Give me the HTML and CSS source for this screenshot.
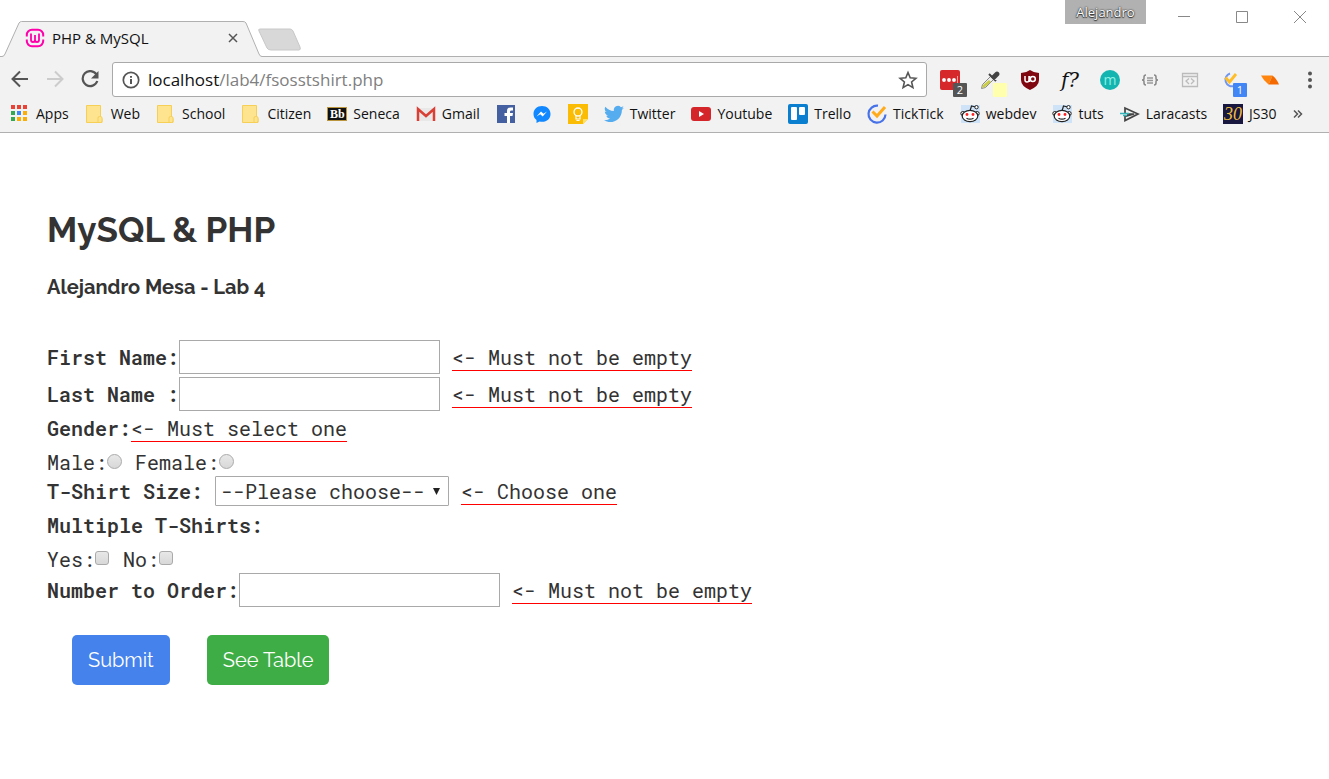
FILE: index.html
```html
<!DOCTYPE html>
<html lang="en">
<head>
<meta charset="utf-8">
<title>PHP &amp; MySQL</title>
<link rel="stylesheet" href="styles.css">
</head>
<body>
<svg class="defs" aria-hidden="true">
  <symbol id="folder" viewBox="0 0 20 20">
    <path d="M1.500 1.500H15.500V13.500L17 14.500V18.500H1.500Z" fill="#ffe48f" stroke="#f6cf56"/>
    <path d="M13 18.500V14q0-1.500 1.500-1.500h1q1.500 0 1.500 1.500v3q0 1.500-1.500 1.500z" fill="#ffe48f" stroke="#f6cf56"/>
  </symbol>
  <symbol id="reddit" viewBox="0 0 20 20">
    <rect x="1" y="1" width="19" height="18" fill="#cee3f8"/>
    <path d="M10 7l1.500-5 4 1" fill="none" stroke="#222" stroke-width="1.200"/>
    <circle cx="16.500" cy="3.200" r="1.700" fill="#fff" stroke="#222"/>
    <circle cx="2.800" cy="9.500" r="2" fill="#fff" stroke="#222"/>
    <circle cx="17.200" cy="9.500" r="2" fill="#fff" stroke="#222"/>
    <ellipse cx="10" cy="12" rx="7.800" ry="5.700" fill="#fff" stroke="#222" stroke-width="1.200"/>
    <circle cx="7" cy="10.500" r="1.400" fill="#f22"/><circle cx="13" cy="10.500" r="1.400" fill="#f22"/>
    <path d="M6.500 14.200q3.500 2 7 0" fill="none" stroke="#222" stroke-width="1.200"/>
  </symbol>
</svg>

<header class="browser">
  <div class="titlebar">
    <div class="tab">
      <svg class="tab-shape" viewBox="0 0 262 37" width="262" height="37" aria-hidden="true">
        <path d="M0 37V35.500H2Q4 35.500 5 33L19 2Q20 .5 21.500 .5H243Q245 .5 246 2L259 33Q260 35.500 262 35.500V37Z" fill="#f2f2f2"/>
        <path d="M0 35.500H2Q4 35.500 5 33L19 2Q20 .5 21.500 .5H243Q245 .5 246 2L259 33Q260 35.500 262 35.500" fill="none" stroke="#b0b0b0"/>
      </svg>
      <svg class="favicon" viewBox="0 0 20 20" width="20" height="20" aria-hidden="true">
        <path d="M1.800 8.500V7a5.200 5.200 0 0 1 5.200-5.200h6a5.200 5.200 0 0 1 5.200 5.200v1.500M1.800 11.500V13a5.200 5.200 0 0 0 5.200 5.200h6a5.200 5.200 0 0 0 5.200-5.200v-1.500" fill="none" stroke="#f0a" stroke-width="2"/>
        <path d="M6 5.500V12q0 2 2 2t2-2V7v5q0 2 2 2t2-2V5.500" fill="none" stroke="#f0a" stroke-width="1.800"/>
      </svg>
      <span class="tab-title">PHP &amp; MySQL</span>
      <button class="icon-button tab-close" aria-label="Close tab"><svg viewBox="0 0 10 10" width="10" height="10"><path d="M1 1l8 8M9 1L1 9" stroke="#555" stroke-width="1.500"/></svg></button>
    </div>
    <button class="icon-button new-tab" aria-label="New tab"><svg viewBox="0 0 44 24" width="44" height="24"><path d="M2 1H32Q34 1 35 3L42 19Q43 22 41 22H13Q10 22 9 20L1 3Q0 1 2 1Z" fill="#d8d8d8" stroke="#c8c8c8"/></svg></button>
    <div class="window">
      <button class="profile">Alejandro</button>
      <button class="icon-button window-button" aria-label="Minimize"><svg viewBox="0 0 14 14" width="14" height="14"><path d="M1 6.500h12" stroke="#888"/></svg></button>
      <button class="icon-button window-button" aria-label="Maximize"><svg viewBox="0 0 14 14" width="14" height="14"><path d="M1.500 1.500h11v11h-11z" fill="none" stroke="#888"/></svg></button>
      <button class="icon-button window-button" aria-label="Close window"><svg viewBox="0 0 14 14" width="14" height="14"><path d="M1 1l12 12M13 1L1 13" stroke="#888"/></svg></button>
    </div>
  </div>

  <div class="toolbar">
    <nav class="history" aria-label="History">
      <button class="icon-button" aria-label="Back"><svg viewBox="0 0 20 20" width="20" height="20"><path d="M18 9H3M10 1.500L2.500 9l7.500 7.500" fill="none" stroke="#555" stroke-width="2"/></svg></button>
      <button class="icon-button" aria-label="Forward"><svg viewBox="0 0 20 20" width="20" height="20"><path d="M2 9h15M10 1.500l7.500 7.500-7.500 7.500" fill="none" stroke="#ccc" stroke-width="2"/></svg></button>
      <button class="icon-button" aria-label="Reload"><svg viewBox="0 0 20 20" width="20" height="20"><path d="M16.500 4.500A7.500 7.500 0 1 0 17.300 11" fill="none" stroke="#555" stroke-width="2.200"/><path d="M18.500 1V8.500H11z" fill="#555"/></svg></button>
    </nav>
    <div class="address">
      <svg viewBox="0 0 18 18" width="18" height="18" aria-hidden="true"><circle cx="9" cy="9" r="7.700" fill="none" stroke="#555" stroke-width="1.700"/><path d="M9 8v5M9 5v1.800" stroke="#555" stroke-width="2"/></svg>
      <div class="url">localhost<span class="path">/lab4/fsosstshirt.php</span></div>
      <button class="icon-button" aria-label="Bookmark this page"><svg viewBox="0 0 20 20" width="20" height="20"><path d="M10 2.500l2.200 5.300 5.700.5-4.300 3.700 1.300 5.600-4.900-3-4.900 3 1.300-5.600-4.300-3.700 5.700-.5z" fill="none" stroke="#555" stroke-width="1.600"/></svg></button>
    </div>
    <div class="extensions">
      <button class="icon-button ext" aria-label="Passwords"><svg viewBox="0 0 20 20" width="20" height="20"><rect width="20" height="20" rx="2" fill="#d6282b"/><circle cx="4" cy="10" r="1.900" fill="#fff"/><circle cx="9" cy="10" r="1.900" fill="#fff"/><circle cx="14" cy="10" r="1.900" fill="#fff"/><path d="M17.500 6v8" stroke="#ff9b9b"/></svg><span class="badge dark">2</span></button>
      <button class="icon-button ext" aria-label="Color picker"><svg viewBox="0 0 20 20" width="20" height="20"><path d="M1.500 18.500l1-4 8-8 3 3-8 8z" fill="#eee" stroke="#888"/><path d="M2 18l1-3 6-5 2 2-6 5z" fill="#c9cc45"/><path d="M9 4l7 7M12 7l4-4q1-1 2 0t0 2l-4 4z" fill="#444" stroke="#444" stroke-width="2"/></svg><span class="badge swatch"></span></button>
      <button class="icon-button ext" aria-label="Content blocker"><svg viewBox="0 0 20 20" width="20" height="20"><path d="M10 0q4 3 9 3v7q0 6-9 10Q1 16 1 10V3q5 0 9-3z" fill="#800610"/><path d="M5 6v4q0 2 2 2t2-2V6M9.500 12V6" fill="none" stroke="#fff" stroke-width="1.500"/><circle cx="12.800" cy="9" r="2.500" fill="none" stroke="#fff" stroke-width="1.500"/></svg></button>
      <button class="icon-button ext script" aria-label="Font finder">f?</button>
      <button class="icon-button ext round" aria-label="Momentum">m</button>
      <button class="icon-button ext" aria-label="JSON viewer"><svg viewBox="0 0 20 20" width="20" height="20"><path d="M6 5q-2 0-2 2v1.500Q4 10 2 10q2 0 2 1.500V13q0 2 2 2M14 5q2 0 2 2v1.500q0 1.500 2 1.500-2 0-2 1.500V13q0 2-2 2" fill="none" stroke="#888" stroke-width="1.500"/><path d="M7 8h6M7 10.500h6M7 13h6" stroke="#999" stroke-width="1.300"/></svg></button>
      <button class="icon-button ext" aria-label="View source"><svg viewBox="0 0 20 20" width="20" height="20"><path d="M2.500 3.500h15v13h-15zM2.500 6.500h15" fill="none" stroke="#bbb" stroke-width="1.300"/><path d="M9 8.500L6 11l3 3M11 8.500l3 2.500-3 3" fill="none" stroke="#bbb" stroke-width="1.300"/></svg></button>
      <button class="icon-button ext" aria-label="Tasks"><svg viewBox="0 0 20 20" width="20" height="20"><path d="M10 3.500A6.500 6.500 0 1 0 14 16" fill="none" stroke="#7196ee" stroke-width="2"/><path d="M5.500 7.500l4 4.500L16 4" fill="none" stroke="#ffbe27" stroke-width="2.800"/></svg><span class="badge blue">1</span></button>
      <button class="icon-button ext" aria-label="Player"><svg viewBox="0 0 20 20" width="20" height="20"><path d="M1 5.500h11.500l-4 9q-5-4-7.500-9z" fill="#ff850f"/><path d="M12.500 5.500q4 3 6.500 9H8.500z" fill="#f46a00"/></svg></button>
      <button class="icon-button ext" aria-label="Menu"><svg viewBox="0 0 20 20" width="20" height="20"><g fill="#555"><circle cx="10" cy="3.500" r="2"/><circle cx="10" cy="10" r="2"/><circle cx="10" cy="16.500" r="2"/></g></svg></button>
    </div>
  </div>

  <nav class="bookmarks" aria-label="Bookmarks">
    <a href="#"><svg viewBox="0 0 20 20" width="20" height="20"><g fill="#ea4335"><path d="M1 1h4v4H1zM7 1h4v4H7zM13 1h4v4h-4z"/></g><path d="M1 7h4v4H1zM1 13h4v4H1z" fill="#34a853"/><path d="M7 7h4v4H7z" fill="#4285f4"/><path d="M13 7h4v4h-4zM7 13h4v4H7zM13 13h4v4h-4z" fill="#fbae05"/></svg>Apps</a>
    <a href="#"><svg width="20" height="20"><use href="#folder"/></svg>Web</a>
    <a href="#"><svg width="20" height="20"><use href="#folder"/></svg>School</a>
    <a href="#"><svg width="20" height="20"><use href="#folder"/></svg>Citizen</a>
    <a href="#"><span class="blackboard">Bb</span>Seneca</a>
    <a href="#"><svg viewBox="0 0 20 20" width="20" height="20"><path d="M1 4h18v13H1z" fill="#e8e8e8"/><path d="M2 17V5l8 7 8-7v12" fill="none" stroke="#d93f35" stroke-width="2.500"/></svg>Gmail</a>
    <a href="#" aria-label="Facebook"><svg viewBox="0 0 20 20" width="20" height="20"><path d="M1 1h18v18H1z" fill="#4460a0"/><path d="M11 19v-7H8.500V9H11V7q0-3.500 3.500-3.500H17v3h-1.500q-1.500 0-1.500 1.300V9h3l-.5 3H14v7z" fill="#fff"/></svg></a>
    <a href="#" aria-label="Messenger"><svg viewBox="0 0 20 20" width="20" height="20"><path d="M10 2c-5 0-8.500 3.400-8.500 8 0 2.500 1 4.500 3 6v3l3-1.500c6 1.500 11-2 11-7.500 0-4.600-3.500-8-8.500-8z" fill="#1188ff"/><path d="M4.500 12.500L9 7.500l2.500 2.300L15 7.500l-4.300 5-2.500-2.200z" fill="#fff"/></svg></a>
    <a href="#" aria-label="Keep"><svg viewBox="0 0 20 20" width="20" height="20"><path d="M0 0h20v15l-5 5H0z" fill="#fbbc05"/><path d="M15 20v-5h5z" fill="#ffe168"/><circle cx="10" cy="8" r="4" fill="none" stroke="#fff" stroke-width="1.300"/><path d="M8 11v4h4v-4M8.500 16.500h3" fill="none" stroke="#fff" stroke-width="1.200"/></svg></a>
    <a href="#"><svg viewBox="0 0 24 24" width="20" height="20"><path d="M24 4.600c-.9.400-1.800.7-2.800.8 1-.6 1.800-1.600 2.200-2.700-1 .6-2 1-3.100 1.200a4.900 4.900 0 0 0-8.400 4.500C7.700 8.100 4.100 6.100 1.700 3.200A4.900 4.900 0 0 0 3.200 9.700c-.8 0-1.600-.2-2.200-.6 0 2.300 1.600 4.400 3.900 4.900-.7.200-1.500.2-2.200.1.600 1.900 2.400 3.300 4.600 3.400A9.900 9.900 0 0 1 0 19.500c8.900 5.700 21.500-.2 21.500-12.400 1-.7 1.800-1.600 2.500-2.500z" fill="#55acee"/></svg>Twitter</a>
    <a href="#"><svg viewBox="0 0 20 20" width="20" height="20"><rect y="3" width="20" height="14" rx="3" fill="#d4252a"/><path d="M8 7l5 3-5 3z" fill="#fff"/></svg>Youtube</a>
    <a href="#"><svg viewBox="0 0 20 20" width="20" height="20"><rect width="20" height="20" rx="2" fill="#0b7fcf"/><rect x="3" y="3" width="6" height="13" rx="1" fill="#fff"/><rect x="11" y="3" width="6" height="8" rx="1" fill="#fff"/></svg>Trello</a>
    <a href="#"><svg viewBox="0 0 20 20" width="20" height="20"><path d="M11 1.700A8.500 8.500 0 1 0 18.500 10.500" fill="none" stroke="#4772e8" stroke-width="2.200"/><path d="M5.500 7.500L10 12l8-9" fill="none" stroke="#ffab1a" stroke-width="3"/></svg>TickTick</a>
    <a href="#"><svg width="20" height="20"><use href="#reddit"/></svg>webdev</a>
    <a href="#"><svg width="20" height="20"><use href="#reddit"/></svg>tuts</a>
    <a href="#"><svg viewBox="0 0 20 20" width="20" height="20"><path d="M5 9V4l13 6-13 6.500v-4l9-2.500H7" fill="none" stroke="#444" stroke-width="1.700"/><path d="M0 9.500h9M3 11.500h4" stroke="#31b3b8" stroke-width="1.500"/></svg>Laracasts</a>
    <a href="#"><span class="thirty">30</span>JS30</a>
    <button class="icon-button more" aria-label="More bookmarks"><svg viewBox="0 0 10 10" width="10" height="10"><path d="M1 1.500L4.500 5 1 8.500M5 1.500L8.500 5 5 8.500" fill="none" stroke="#555" stroke-width="1.500"/></svg></button>
  </nav>
</header>

<main class="page">
  <h1>MySQL &amp; PHP</h1>
  <h2>Alejandro Mesa - Lab 4</h2>
  <form class="order">
    <div class="field"><label for="first">First Name:</label><input class="text" id="first" type="text"><span class="error">&lt;- Must not be empty</span></div>
    <div class="field"><label for="last">Last Name :</label><input class="text" id="last" type="text"><span class="error">&lt;- Must not be empty</span></div>
    <div class="group"><b>Gender:</b><span class="error flush">&lt;- Must select one</span></div>
    <div class="choices">
      <label>Male:<input class="radio" type="radio" name="gender"></label>
      <label>Female:<input class="radio" type="radio" name="gender"></label>
    </div>
    <div class="field pick">
      <label for="size">T-Shirt Size:</label>
      <span class="select-box"><select id="size"><option>--Please choose--</option></select><svg viewBox="0 0 8 8" width="8" height="8" aria-hidden="true"><path d="M0 0h7L3.500 7z" fill="#222"/></svg></span>
      <span class="error">&lt;- Choose one</span>
    </div>
    <div class="group"><b>Multiple T-Shirts:</b></div>
    <div class="choices">
      <label>Yes:<input class="check" type="checkbox"></label>
      <label>No:<input class="check" type="checkbox"></label>
    </div>
    <div class="field"><label for="count">Number to Order:</label><input class="text" id="count" type="text"><span class="error">&lt;- Must not be empty</span></div>
    <div class="actions">
      <button class="action submit" type="submit">Submit</button>
      <button class="action table" type="button">See Table</button>
    </div>
  </form>
</main>
</body>
</html>
```

FILE: styles.css
```css
* { box-sizing: border-box; }
body { margin: 0; background: #fff; color: #333; }
svg { display: block; flex: none; }
.defs { position: absolute; width: 0; height: 0; }

.browser {
  font: 14px/20px "Segoe UI", "Open Sans", "Noto Sans", sans-serif;
  color: #111;
  background: #f2f2f2;
  border-bottom: 1px solid #b0b0b0;
}
.icon-button {
  display: flex;
  align-items: center;
  justify-content: center;
  flex: none;
  padding: 0;
  border: 0;
  background: none;
  font: inherit;
  color: inherit;
}

.titlebar {
  display: flex;
  align-items: flex-end;
  height: 57px;
  background: #fff;
  border-bottom: 1px solid #b0b0b0;
}
.tab {
  position: relative;
  display: flex;
  align-items: center;
  gap: 7px;
  width: 262px;
  height: 35px;
  padding: 0 24px 1px 25px;
}
.tab > * { position: relative; }
.tab .tab-shape { position: absolute; left: 0; top: 0; }
.tab-title { flex: 1; font-size: 15px; }
.new-tab { align-self: flex-end; margin: 0 0 4px -4px; }
.window { display: flex; align-self: flex-start; margin-left: auto; }
.profile {
  width: 81px;
  height: 24px;
  margin-right: 9px;
  padding: 0;
  border: 0;
  background: #b1b1b1;
  color: #fff;
  font: 13px/24px "Segoe UI", "Open Sans", sans-serif;
  text-shadow: 0 0 1px #333, 0 0 2px #333, 0 1px 1px #333;
}
.window-button { width: 58px; height: 34px; }

.toolbar {
  display: flex;
  align-items: center;
  gap: 13px;
  padding: 5px 9px 0 10px;
}
.history { display: flex; gap: 15px; margin-right: -1px; }
.address {
  display: flex;
  flex: 1;
  align-items: center;
  gap: 8px;
  height: 35px;
  padding: 0 8px 0 9px;
  background: #fff;
  border: 1px solid #a9a9a9;
  border-radius: 3px;
}
.url { flex: 1; font-size: 17px; }
.path { color: #808080; }
.extensions { display: flex; gap: 20px; }
.ext { position: relative; width: 20px; height: 20px; }
.badge {
  position: absolute;
  left: 13px;
  top: 13px;
  width: 14px;
  height: 14px;
  border-radius: 1px;
  color: #fff;
  font-size: 11px;
  line-height: 14px;
  text-align: center;
}
.dark { background: #555; }
.swatch { background: #ffffae; }
.blue { background: #4285f4; }
.script { color: #111; font: italic 20px/20px "DejaVu Serif", serif; }
.round {
  border-radius: 50%;
  background: #14b5b0;
  color: #8ff0e5;
  line-height: 16px;
}

.bookmarks {
  display: flex;
  align-items: center;
  gap: 16px;
  height: 35px;
  padding: 0 24px 1px 10px;
}
.bookmarks a {
  display: flex;
  align-items: center;
  gap: 6px;
  flex: none;
  color: inherit;
  text-decoration: none;
}
.blackboard {
  width: 20px;
  height: 14px;
  border: 1px solid #bc963e;
  background: #111;
  color: #fff;
  font: bold 12px/12px "Liberation Serif", serif;
  text-align: center;
}
.thirty {
  width: 20px;
  height: 20px;
  background: #17173f;
  color: #f0bd3d;
  font: italic 18px/20px "Liberation Serif", serif;
  text-align: center;
}

.page { padding: 75px 47px 0; }
h1, h2 { margin: 0; font-family: Raleway, Lato, sans-serif; font-weight: 700; }
h1 { font-size: 35px; line-height: 44px; }
h2 { margin-top: 23px; font-size: 20px; line-height: 24px; }

.order {
  margin-top: 41px;
  font: 400 20px/26px "Roboto Mono", "Liberation Mono", monospace;
}
.field { display: flex; align-items: center; }
.field + .field { margin-top: 3px; }
.field > label, .group b { font-weight: 600; }
.text {
  width: 261px;
  height: 34px;
  padding: 2px 4px;
  border: 1px solid #a9a9a9;
  background: #fff;
  font: inherit;
}
.error { margin-left: 12px; border-bottom: 1px solid #f00; }
.flush { margin-left: 0; }
.group { display: flex; align-items: flex-start; height: 35px; padding-top: 4px; }
.choices { display: flex; gap: 12px; height: 30px; padding-top: 3px; }
.choices label { display: flex; align-items: center; height: 26px; }
.radio, .check {
  appearance: none;
  width: 15px;
  height: 15px;
  margin: 0 1px 2px 0;
  border: 1px solid #aaa;
  background: linear-gradient(#e8e8e8, #d8d8d8);
}
.radio { border-radius: 50%; }
.check { width: 14px; height: 14px; margin-right: 2px; border-radius: 3px; }
.pick { margin-bottom: 2px; }
.select-box { position: relative; margin-left: 12px; }
.select-box select {
  display: block;
  appearance: none;
  width: 234px;
  height: 30px;
  padding: 0 5px;
  border: 1px solid #a9a9a9;
  border-radius: 1px;
  background: #fff;
  color: inherit;
  font: inherit;
}
.select-box svg { position: absolute; right: 8px; top: 12px; }
.actions { display: flex; gap: 37px; padding: 28px 25px 0; }
.action {
  height: 50px;
  padding: 0 16px;
  border: 0;
  border-radius: 5px;
  color: #fff;
  font: 20px/50px Raleway, Lato, sans-serif;
}
.submit { background: #4582ec; }
.table { background: #3fad46; }
```
